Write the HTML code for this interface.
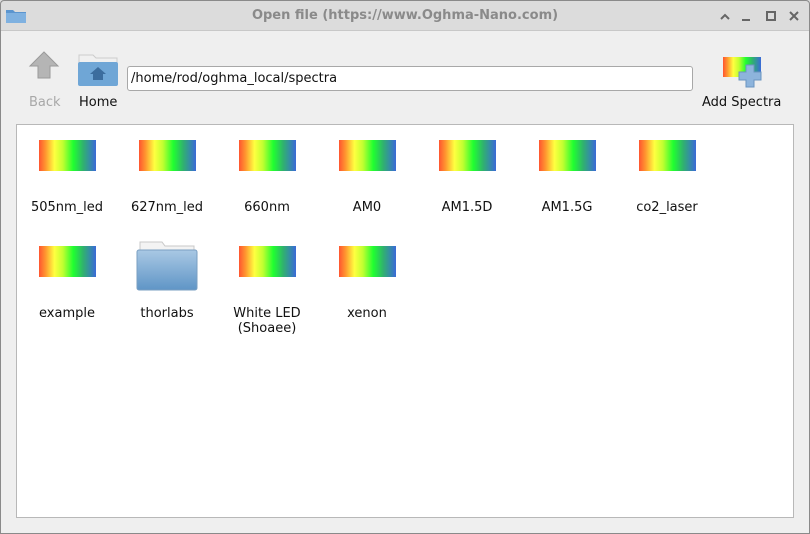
<!DOCTYPE html>
<html><head><meta charset="utf-8"><style>
*{margin:0;padding:0;box-sizing:border-box}
body{width:810px;height:534px;overflow:hidden;font-family:"DejaVu Sans","Liberation Sans",sans-serif;font-size:13px;color:#111;background:#efefef;position:relative}
.frame{position:absolute;left:0;top:0;width:810px;height:534px;border:1px solid #8a8a8a;border-radius:4px 4px 0 0;pointer-events:none;z-index:5}
.title{position:absolute;left:0;top:0;width:810px;height:31px;background:#dcdcdc;border-bottom:1px solid #c8c8c8}
.title .t{position:absolute;left:0;right:0;top:8px;text-align:center;font-weight:bold;color:#8a8a8a;font-size:13px}
.grad{position:absolute;width:57px;height:31px;background:linear-gradient(to right,#ff5530 0%,#ff9a30 12%,#ffff40 27%,#c0ff30 42%,#20ff30 60%,#30b070 78%,#3a6ad8 100%)}
.lbl{position:absolute;width:100px;text-align:center;font-size:13px;line-height:15px}
.content{position:absolute;left:16px;top:124px;width:778px;height:394px;background:#fff;border:1px solid #b8b8b8}
.path{position:absolute;left:127px;top:66px;width:566px;height:25px;background:#fff;border:1px solid #a8a8a8;border-radius:3px;padding:4px 3px;font-size:13px}
</style></head><body>
<div class="frame"></div>
<div class="title">
<svg style="position:absolute;left:5px;top:7px" width="22" height="17"><path d="M1 3h7l2 2h11v11H1z" fill="#5b95cf"/><rect x="1" y="6" width="20" height="10" fill="#7fb1e0"/></svg>
<div class="t">Open file (https://www.Oghma-Nano.com)</div>
<svg style="position:absolute;left:716px;top:9px" width="90" height="14" fill="none" stroke="#666" stroke-width="2">
<path d="M5 10l4-4 4 4"/><path d="M26 11h8"/><rect x="51" y="3" width="8" height="8"/><path d="M74 3l8 8M82 3l-8 8"/></svg>
</div>
<svg style="position:absolute;left:28px;top:50px" width="32" height="32"><path d="M16 2L2 16h8v12h12V16h8z" fill="#b5b5b5" stroke="#9a9a9a"/></svg>
<div style="position:absolute;left:29px;top:95px;color:#a8a8a8">Back</div>
<svg style="position:absolute;left:77px;top:51px" width="42" height="36"><path d="M2 4h14l3 3h21v26H2z" fill="#f0f0f0" stroke="#ccc"/><rect x="1" y="11" width="40" height="24" rx="2" fill="#6fa6d6"/><path d="M21 16l-8 7h3v6h10v-6h3z" fill="#3c6d9e"/></svg>
<div style="position:absolute;left:79px;top:95px">Home</div>
<div class="path">/home/rod/oghma_local/spectra</div>
<div class="grad" style="left:723px;top:57px;width:38px;height:20px"></div>
<svg style="position:absolute;left:738px;top:64px" width="24" height="24"><path d="M8 1h8v7h7v8h-7v7H8v-7H1V8h7z" fill="#8db4dc" stroke="#6a94c0"/></svg>
<div style="position:absolute;left:702px;top:95px">Add Spectra</div>
<div class="content"></div>

<div class="grad" style="left:39px;top:140px"></div><div class="lbl" style="left:17px;top:200px">505nm_led</div>
<div class="grad" style="left:139px;top:140px"></div><div class="lbl" style="left:117px;top:200px">627nm_led</div>
<div class="grad" style="left:239px;top:140px"></div><div class="lbl" style="left:217px;top:200px">660nm</div>
<div class="grad" style="left:339px;top:140px"></div><div class="lbl" style="left:317px;top:200px">AM0</div>
<div class="grad" style="left:439px;top:140px"></div><div class="lbl" style="left:417px;top:200px">AM1.5D</div>
<div class="grad" style="left:539px;top:140px"></div><div class="lbl" style="left:517px;top:200px">AM1.5G</div>
<div class="grad" style="left:639px;top:140px"></div><div class="lbl" style="left:617px;top:200px">co2_laser</div>
<div class="grad" style="left:39px;top:246px"></div><div class="lbl" style="left:17px;top:306px">example</div>
<svg style="position:absolute;left:136px;top:240px" width="62" height="52"><path d="M4 2h22l3 4h29v12H4z" fill="#f3f3f3" stroke="#c8c8c8"/><defs><linearGradient id="f" x1="0" y1="0" x2="0" y2="1"><stop offset="0" stop-color="#a9c8e4"/><stop offset="1" stop-color="#5f95c6"/></linearGradient></defs><rect x="1" y="10" width="60" height="40" rx="2" fill="url(#f)" stroke="#7a9fc2"/></svg>
<div class="lbl" style="left:117px;top:306px">thorlabs</div>
<div class="grad" style="left:239px;top:246px"></div><div class="lbl" style="left:217px;top:306px">White LED<br>(Shoaee)</div>
<div class="grad" style="left:339px;top:246px"></div><div class="lbl" style="left:317px;top:306px">xenon</div>
</body></html>
